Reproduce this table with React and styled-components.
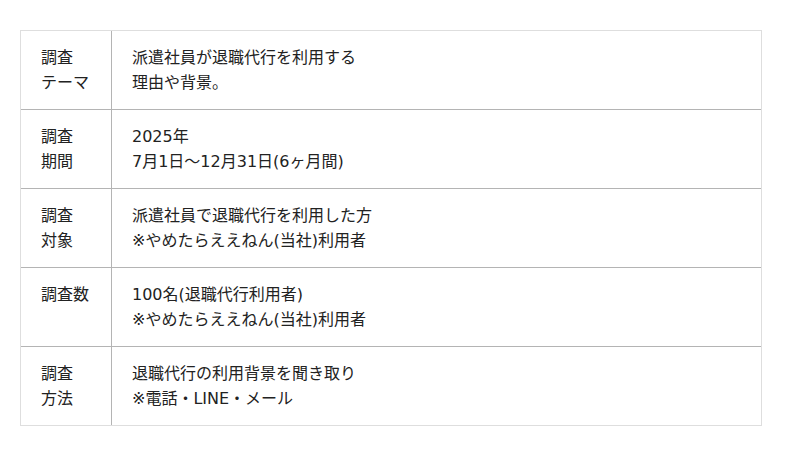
import React from "react";
import styled, { createGlobalStyle } from "styled-components";

const Global = createGlobalStyle`
  html, body { margin: 0; padding: 0; background: #fff; }
  body {
    font-family: "DejaVu Sans", "Noto Sans CJK JP", sans-serif;
    color: #222;
  }
`;

const Page = styled.div`
  padding: 30px 38px 30px 20px;
`;

const Table = styled.div`
  width: 742px;
  box-sizing: border-box;
  border: 1px solid #dedede;
  display: grid;
  grid-template-columns: 90px 1fr;
`;

const Cell = styled.div`
  box-sizing: border-box;
  padding: 14px 20px;
  height: ${(p) => (p.$last ? 78 : 79)}px;
  font-size: 16px;
  line-height: 25px;
  border-bottom: ${(p) => (p.$last ? "none" : "1px solid #b4b4b4")};
  border-left: ${(p) => (p.$value ? "1px solid #b4b4b4" : "none")};
  white-space: nowrap;
`;

const rows = [
  [["調査", "テーマ"], ["派遣社員が退職代行を利用する", "理由や背景。"]],
  [["調査", "期間"], ["2025年", "7月1日〜12月31日(6ヶ月間)"]],
  [["調査", "対象"], ["派遣社員で退職代行を利用した方", "※やめたらええねん(当社)利用者"]],
  [["調査数"], ["100名(退職代行利用者)", "※やめたらええねん(当社)利用者"]],
  [["調査", "方法"], ["退職代行の利用背景を聞き取り", "※電話・LINE・メール"]],
];

const Lines = ({ items }) =>
  items.map((t, i) => <div key={i}>{t}</div>);

export default function App() {
  return (
    <>
      <Global />
      <Page>
        <Table>
          {rows.map(([label, value], i) => {
            const last = i === rows.length - 1;
            return (
              <React.Fragment key={i}>
                <Cell $last={last}>
                  <Lines items={label} />
                </Cell>
                <Cell $last={last} $value>
                  <Lines items={value} />
                </Cell>
              </React.Fragment>
            );
          })}
        </Table>
      </Page>
    </>
  );
}
